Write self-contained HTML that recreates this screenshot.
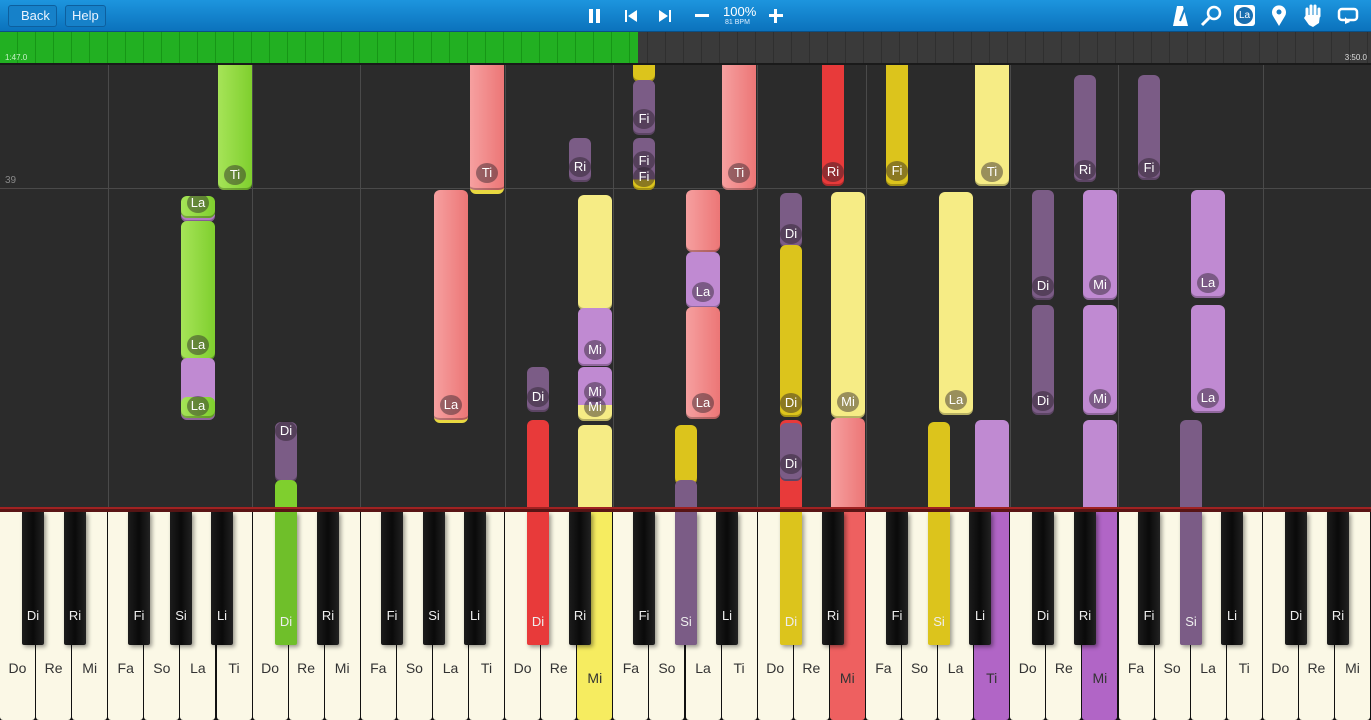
<!DOCTYPE html>
<html><head><meta charset="utf-8"><style>
*{margin:0;padding:0;box-sizing:border-box}
body{width:1371px;height:720px;overflow:hidden;background:#2a2a2a;font-family:"Liberation Sans",sans-serif;position:relative}
#top{position:absolute;left:0;top:0;width:1371px;height:32px;background:linear-gradient(#1d95de,#0b72bc);z-index:5;border-bottom:1px solid #0a4f85}
.btn{position:absolute;top:5px;height:22px;border:1px solid #0d5f9e;border-radius:3px;background:#1681c9;color:#eaf4ff;font-size:13px;line-height:20px;padding:0 6px}
#prog{position:absolute;left:0;top:32px;width:1371px;height:33px;z-index:5;background:repeating-linear-gradient(90deg,#3a3a3a 0 17px,#2f2f2f 17px 18px);border-bottom:2px solid #1a1a1a}
#green{position:absolute;left:0;top:0;width:638px;height:31px;background:repeating-linear-gradient(90deg,#22b022 0 17px,#169616 17px 18px)}
#area{position:absolute;left:0;top:0;width:1371px;height:507px;overflow:hidden;background:#2b2b2b}
.vl{position:absolute;top:65px;width:1px;height:442px;background:#4a4a4a}
.n{position:absolute;border-radius:6px;box-shadow:inset 0 -2px 0 rgba(0,0,0,.25)}
.lb{position:absolute;width:22px;height:20px;margin-left:-11px;margin-top:-10px;border-radius:50%;background:rgba(40,30,40,.45);color:#fff;font-size:13px;line-height:20px;text-align:center}
#kb{position:absolute;left:0;top:507px;width:1371px;height:213px;background:#111}
.w{position:absolute;top:5px;width:35px;height:208px;background:#fbf8e6;border-radius:0 0 3px 3px}
.w span{position:absolute;left:0;right:0;top:148px;text-align:center;font-size:14px;color:#333}
.b{position:absolute;top:5px;width:22px;height:133px;background:linear-gradient(90deg,#1c1c1c,#0a0a0a 50%,#222);border-radius:0 0 2px 2px;box-shadow:2px 2px 4px rgba(0,0,0,.4)}
.b span{position:absolute;left:0;right:0;top:96px;text-align:center;font-size:13px;color:#eee}
.ic{position:absolute;top:6px;color:#fff;font-size:18px}
</style></head><body>
<div id="area">
<div class="vl" style="left:108px"></div><div class="vl" style="left:252px"></div><div class="vl" style="left:360px"></div><div class="vl" style="left:505px"></div><div class="vl" style="left:613px"></div><div class="vl" style="left:757px"></div><div class="vl" style="left:866px"></div><div class="vl" style="left:1010px"></div><div class="vl" style="left:1118px"></div><div class="vl" style="left:1263px"></div>
<div style="position:absolute;left:0;top:188px;width:1371px;height:1px;background:#4a4a4a"></div>
<div style="position:absolute;left:5px;top:175px;font-size:10px;color:#888">39</div>

<div class="n" style="left:218px;top:55px;width:34px;height:135px;background:linear-gradient(90deg,#a6e458,#7fcf2e)"></div>
<div class="n" style="left:181px;top:210px;width:34px;height:12px;background:#b27cc4"></div>
<div class="n" style="left:181px;top:196px;width:34px;height:22px;background:linear-gradient(90deg,#a6e458,#7fcf2e)"></div>
<div class="n" style="left:181px;top:221px;width:34px;height:139px;background:linear-gradient(90deg,#a6e458,#7fcf2e)"></div>
<div class="n" style="left:181px;top:358px;width:34px;height:62px;background:#c08ad2"></div>
<div class="n" style="left:181px;top:397px;width:34px;height:21px;background:linear-gradient(90deg,#a6e458,#7fcf2e)"></div>
<div class="n" style="left:275px;top:422px;width:22px;height:60px;background:#7b5c86"></div>
<div class="n" style="left:275px;top:480px;width:22px;height:40px;background:#7fcf2e"></div>
<div class="n" style="left:434px;top:190px;width:34px;height:233px;background:linear-gradient(90deg,#f6a0a0,#ec7676);border-bottom:3px solid #e8d840"></div>
<div class="n" style="left:470px;top:55px;width:34px;height:139px;background:linear-gradient(90deg,#f6a0a0,#ec7676);border-bottom:4px solid #e8d840"></div>
<div class="n" style="left:527px;top:367px;width:22px;height:45px;background:#7b5c86"></div>
<div class="n" style="left:527px;top:420px;width:22px;height:100px;background:#e83a3a"></div>
<div class="n" style="left:569px;top:138px;width:22px;height:44px;background:#7b5c86"></div>
<div class="n" style="left:578px;top:195px;width:34px;height:115px;background:#f6ec85"></div>
<div class="n" style="left:578px;top:308px;width:34px;height:58px;background:#c08ad2"></div>
<div class="n" style="left:578px;top:367px;width:34px;height:54px;background:linear-gradient(#c08ad2 0 70%,#f6ec85 70%)"></div>
<div class="n" style="left:578px;top:425px;width:34px;height:95px;background:#f6ec85"></div>
<div class="n" style="left:633px;top:55px;width:22px;height:27px;background:#dcc41c"></div>
<div class="n" style="left:633px;top:80px;width:22px;height:55px;background:#7b5c86"></div>
<div class="n" style="left:633px;top:138px;width:22px;height:52px;background:linear-gradient(#7b5c86 0 80%,#dcc41c 80%)"></div>
<div class="n" style="left:675px;top:425px;width:22px;height:60px;background:#dcc41c"></div>
<div class="n" style="left:675px;top:480px;width:22px;height:40px;background:#7b5c86"></div>
<div class="n" style="left:686px;top:190px;width:34px;height:62px;background:linear-gradient(90deg,#f6a0a0,#ec7676)"></div>
<div class="n" style="left:686px;top:252px;width:34px;height:56px;background:#c08ad2"></div>
<div class="n" style="left:686px;top:307px;width:34px;height:112px;background:linear-gradient(90deg,#f6a0a0,#ec7676)"></div>
<div class="n" style="left:722px;top:55px;width:34px;height:135px;background:linear-gradient(90deg,#f6a0a0,#ec7676)"></div>
<div class="n" style="left:780px;top:193px;width:22px;height:55px;background:#7b5c86"></div>
<div class="n" style="left:780px;top:245px;width:22px;height:172px;background:#dcc41c"></div>
<div class="n" style="left:780px;top:420px;width:22px;height:100px;background:#e83a3a"></div>
<div class="n" style="left:780px;top:423px;width:22px;height:58px;background:#7b5c86"></div>
<div class="n" style="left:822px;top:55px;width:22px;height:131px;background:#e83a3a"></div>
<div class="n" style="left:831px;top:192px;width:34px;height:226px;background:#f6ec85"></div>
<div class="n" style="left:831px;top:418px;width:34px;height:102px;background:linear-gradient(90deg,#f6a0a0,#ec7676)"></div>
<div class="n" style="left:886px;top:55px;width:22px;height:131px;background:#dcc41c"></div>
<div class="n" style="left:939px;top:192px;width:34px;height:223px;background:#f6ec85"></div>
<div class="n" style="left:928px;top:422px;width:22px;height:98px;background:#dcc41c"></div>
<div class="n" style="left:975px;top:55px;width:34px;height:131px;background:#f6ec85"></div>
<div class="n" style="left:975px;top:420px;width:34px;height:100px;background:#c08ad2"></div>
<div class="n" style="left:1032px;top:190px;width:22px;height:110px;background:#7b5c86"></div>
<div class="n" style="left:1032px;top:305px;width:22px;height:110px;background:#7b5c86"></div>
<div class="n" style="left:1074px;top:75px;width:22px;height:107px;background:#7b5c86"></div>
<div class="n" style="left:1083px;top:190px;width:34px;height:110px;background:#c08ad2"></div>
<div class="n" style="left:1083px;top:305px;width:34px;height:110px;background:#c08ad2"></div>
<div class="n" style="left:1083px;top:420px;width:34px;height:100px;background:#c08ad2"></div>
<div class="n" style="left:1138px;top:75px;width:22px;height:105px;background:#7b5c86"></div>
<div class="n" style="left:1180px;top:420px;width:22px;height:100px;background:#7b5c86"></div>
<div class="n" style="left:1191px;top:190px;width:34px;height:108px;background:#c08ad2"></div>
<div class="n" style="left:1191px;top:305px;width:34px;height:108px;background:#c08ad2"></div>

<div class="lb" style="left:235px;top:175px">Ti</div>
<div class="lb" style="left:198px;top:203px">La</div>
<div class="lb" style="left:198px;top:345px">La</div>
<div class="lb" style="left:198px;top:406px">La</div>
<div class="lb" style="left:286px;top:431px">Di</div>
<div class="lb" style="left:451px;top:405px">La</div>
<div class="lb" style="left:487px;top:173px">Ti</div>
<div class="lb" style="left:538px;top:397px">Di</div>
<div class="lb" style="left:580px;top:167px">Ri</div>
<div class="lb" style="left:595px;top:350px">Mi</div>
<div class="lb" style="left:595px;top:392px">Mi</div>
<div class="lb" style="left:595px;top:407px">Mi</div>
<div class="lb" style="left:644px;top:119px">Fi</div>
<div class="lb" style="left:644px;top:161px">Fi</div>
<div class="lb" style="left:644px;top:177px">Fi</div>
<div class="lb" style="left:703px;top:292px">La</div>
<div class="lb" style="left:703px;top:403px">La</div>
<div class="lb" style="left:739px;top:173px">Ti</div>
<div class="lb" style="left:791px;top:234px">Di</div>
<div class="lb" style="left:791px;top:403px">Di</div>
<div class="lb" style="left:791px;top:464px">Di</div>
<div class="lb" style="left:833px;top:172px">Ri</div>
<div class="lb" style="left:848px;top:402px">Mi</div>
<div class="lb" style="left:897px;top:171px">Fi</div>
<div class="lb" style="left:956px;top:400px">La</div>
<div class="lb" style="left:992px;top:172px">Ti</div>
<div class="lb" style="left:1043px;top:286px">Di</div>
<div class="lb" style="left:1043px;top:401px">Di</div>
<div class="lb" style="left:1085px;top:170px">Ri</div>
<div class="lb" style="left:1100px;top:285px">Mi</div>
<div class="lb" style="left:1100px;top:399px">Mi</div>
<div class="lb" style="left:1149px;top:168px">Fi</div>
<div class="lb" style="left:1208px;top:283px">La</div>
<div class="lb" style="left:1208px;top:398px">La</div>
</div>

<div id="top">
<div class="btn" style="left:8px;border-radius:3px 3px 3px 3px;padding-left:12px">Back</div>
<div class="btn" style="left:65px">Help</div>
<div style="position:absolute;left:589px;top:9px;width:4px;height:14px;background:#fff"></div><div style="position:absolute;left:596px;top:9px;width:4px;height:14px;background:#fff"></div>
<svg style="position:absolute;left:624px;top:9px" width="14" height="14"><rect x="1" y="1" width="2" height="12" fill="#fff"/><path d="M13 1 L4 7 L13 13Z" fill="#fff"/></svg>
<svg style="position:absolute;left:658px;top:9px" width="14" height="14"><rect x="11" y="1" width="2" height="12" fill="#fff"/><path d="M1 1 L10 7 L1 13Z" fill="#fff"/></svg>
<div style="position:absolute;left:695px;top:14px;width:14px;height:3px;background:#fff"></div>
<div style="position:absolute;left:723px;top:4px;color:#fff;font-size:13px">100%</div>
<div style="position:absolute;left:725px;top:19px;color:#dfefff;font-size:7px">81 BPM</div>
<div style="position:absolute;left:769px;top:14px;width:14px;height:3px;background:#fff"></div><div style="position:absolute;left:774px;top:9px;width:3px;height:14px;background:#fff"></div>
<svg style="position:absolute;left:1172px;top:5px" width="18" height="22"><path d="M5 1 L11 1 L16 21 L1 21Z" fill="#fff"/><path d="M8 16 L13 3" stroke="#1a80c8" stroke-width="2"/></svg>
<svg style="position:absolute;left:1200px;top:5px" width="22" height="22"><circle cx="14" cy="8" r="6" stroke="#fff" stroke-width="2.5" fill="none"/><path d="M9 13 L2 20" stroke="#fff" stroke-width="3"/></svg>
<div style="position:absolute;left:1234px;top:5px;width:21px;height:21px;background:#fff;border-radius:3px"><div style="position:absolute;left:2px;top:2px;width:17px;height:17px;border-radius:50%;background:#1a6fb0;color:#fff;font-size:10px;line-height:17px;text-align:center">La</div></div>
<svg style="position:absolute;left:1270px;top:5px" width="18" height="22"><path d="M9 21 L3 11 A7 7 0 1 1 15 11Z" fill="#fff"/><circle cx="9" cy="7" r="2.5" fill="#1a80c8"/></svg>
<svg style="position:absolute;left:1303px;top:4px" width="20" height="24"><path d="M4 12 L4 5 M8 11 L8 2 M12 11 L12 2 M16 12 L16 5" stroke="#fff" stroke-width="3" stroke-linecap="round"/><path d="M3 11 L17 11 L16 19 L10 23 L6 21 L1 14Z" fill="#fff"/></svg>
<svg style="position:absolute;left:1337px;top:7px" width="22" height="18"><rect x="2" y="2" width="18" height="11" rx="3" stroke="#fff" stroke-width="2.5" fill="none"/><path d="M8 10 L13 15 L8 17Z" fill="#fff"/></svg>
</div>
<div id="prog"><div id="green"></div>
<div style="position:absolute;left:5px;top:21px;font-size:8px;color:#c8f0c8">1:47.0</div>
<div style="position:absolute;right:4px;top:21px;font-size:8px;color:#ddd">3:50.0</div></div>

<div id="kb">
<div style="position:absolute;left:0;top:0;width:1371px;height:5px;background:#5a1515;border-top:2px solid #a02222"></div>
<div class="w" style="left:0px"><span>Do</span></div><div class="w" style="left:36.1px"><span>Re</span></div><div class="w" style="left:72.2px"><span>Mi</span></div><div class="w" style="left:108.2px"><span>Fa</span></div><div class="w" style="left:144.3px"><span>So</span></div><div class="w" style="left:180.4px"><span>La</span></div><div class="w" style="left:216.5px"><span>Ti</span></div>
<div class="w" style="left:252.6px"><span>Do</span></div><div class="w" style="left:288.6px"><span>Re</span></div><div class="w" style="left:324.7px"><span>Mi</span></div><div class="w" style="left:360.8px"><span>Fa</span></div><div class="w" style="left:396.9px"><span>So</span></div><div class="w" style="left:433px"><span>La</span></div><div class="w" style="left:469px"><span>Ti</span></div>
<div class="w" style="left:505.1px"><span>Do</span></div><div class="w" style="left:541.2px"><span>Re</span></div><div class="w" style="left:577.3px;background:#f6ec60"><span style="top:158px">Mi</span></div><div class="w" style="left:613.4px"><span>Fa</span></div><div class="w" style="left:649.4px"><span>So</span></div><div class="w" style="left:685.5px"><span>La</span></div><div class="w" style="left:721.6px"><span>Ti</span></div>
<div class="w" style="left:757.7px"><span>Do</span></div><div class="w" style="left:793.8px"><span>Re</span></div><div class="w" style="left:829.8px;background:#ee6060"><span style="top:158px">Mi</span></div><div class="w" style="left:865.9px"><span>Fa</span></div><div class="w" style="left:902px"><span>So</span></div><div class="w" style="left:938.1px"><span>La</span></div><div class="w" style="left:974.2px;background:#b165c6"><span style="top:158px">Ti</span></div>
<div class="w" style="left:1010.2px"><span>Do</span></div><div class="w" style="left:1046.3px"><span>Re</span></div><div class="w" style="left:1082.4px;background:#b165c6"><span style="top:158px">Mi</span></div><div class="w" style="left:1118.5px"><span>Fa</span></div><div class="w" style="left:1154.6px"><span>So</span></div><div class="w" style="left:1190.6px"><span>La</span></div><div class="w" style="left:1226.7px"><span>Ti</span></div>
<div class="w" style="left:1262.8px"><span>Do</span></div><div class="w" style="left:1298.9px"><span>Re</span></div><div class="w" style="left:1335px"><span>Mi</span></div>

<div class="b" style="left:22px"><span>Di</span></div><div class="b" style="left:64px"><span>Ri</span></div><div class="b" style="left:128px"><span>Fi</span></div><div class="b" style="left:170px"><span>Si</span></div><div class="b" style="left:211px"><span>Li</span></div>
<div class="b" style="left:275px;background:#6fbf2a"><span style="top:102px">Di</span></div><div class="b" style="left:317px"><span>Ri</span></div><div class="b" style="left:381px"><span>Fi</span></div><div class="b" style="left:423px"><span>Si</span></div><div class="b" style="left:464px"><span>Li</span></div>
<div class="b" style="left:527px;background:#e83a3a"><span style="top:102px">Di</span></div><div class="b" style="left:569px"><span>Ri</span></div><div class="b" style="left:633px"><span>Fi</span></div><div class="b" style="left:675px;background:#7b5c86"><span style="top:102px">Si</span></div><div class="b" style="left:716px"><span>Li</span></div>
<div class="b" style="left:780px;background:#dcc41c"><span style="top:102px">Di</span></div><div class="b" style="left:822px"><span>Ri</span></div><div class="b" style="left:886px"><span>Fi</span></div><div class="b" style="left:928px;background:#dcc41c"><span style="top:102px">Si</span></div><div class="b" style="left:969px"><span>Li</span></div>
<div class="b" style="left:1032px"><span>Di</span></div><div class="b" style="left:1074px"><span>Ri</span></div><div class="b" style="left:1138px"><span>Fi</span></div><div class="b" style="left:1180px;background:#7b5c86"><span style="top:102px">Si</span></div><div class="b" style="left:1221px"><span>Li</span></div>
<div class="b" style="left:1285px"><span>Di</span></div><div class="b" style="left:1327px"><span>Ri</span></div>
</div>
</body></html>
